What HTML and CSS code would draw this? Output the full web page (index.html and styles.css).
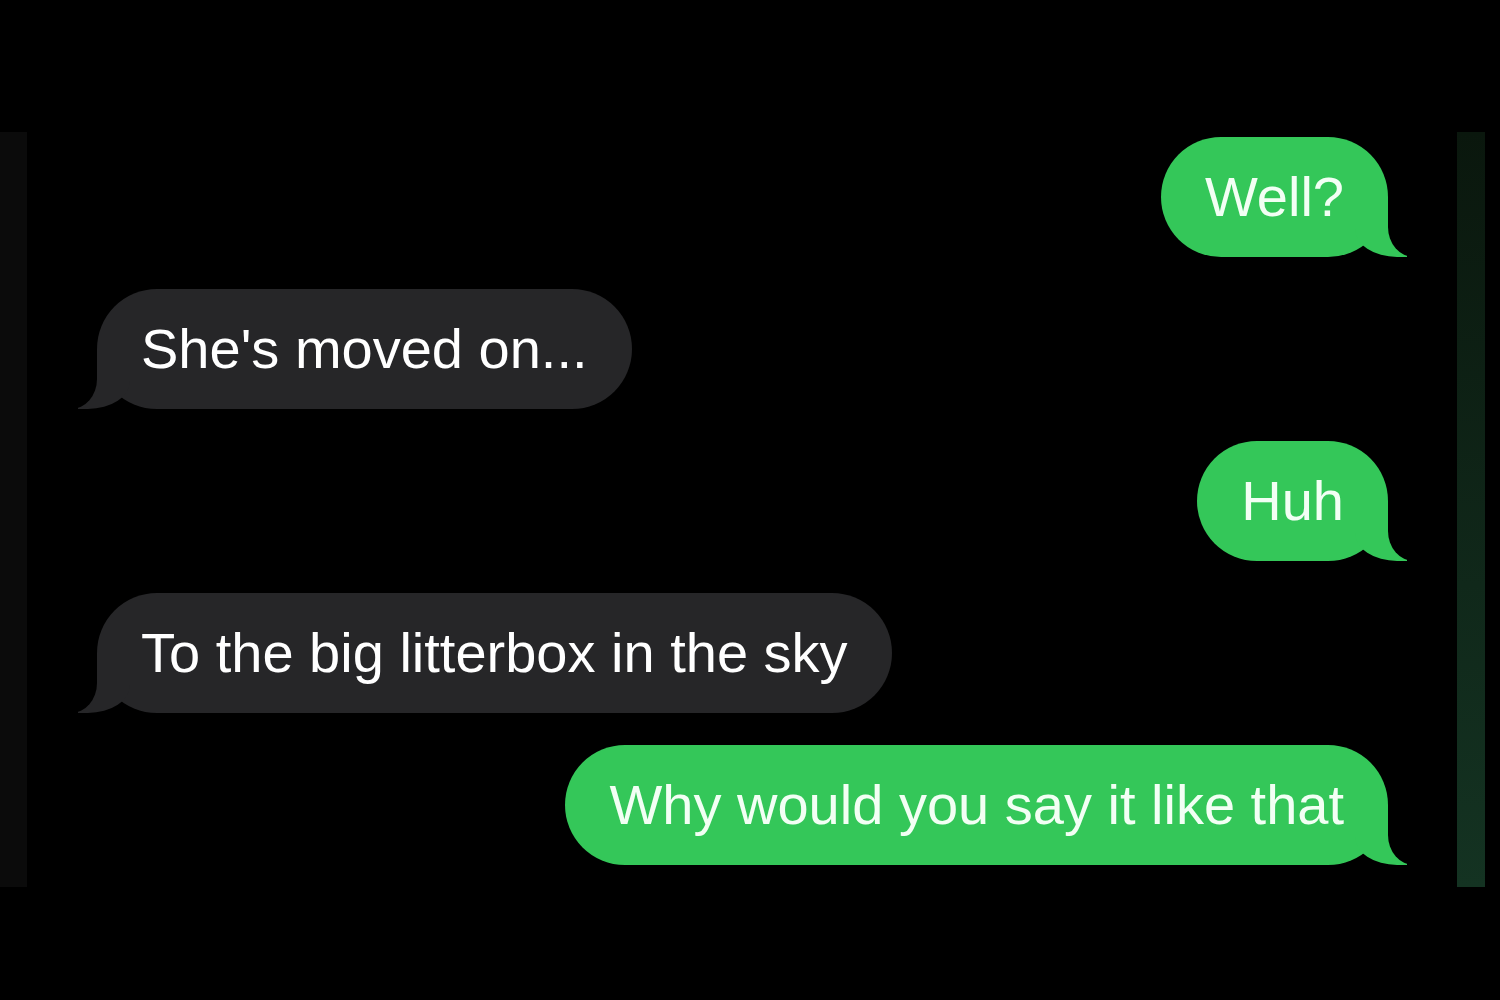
FILE: index.html
```html
<!DOCTYPE html>
<html lang="en">
<head>
    <meta charset="UTF-8">
    <meta name="viewport" content="width=device-width, initial-scale=1.0">
    <title>Messages</title>
    <link rel="stylesheet" href="styles.css">
</head>
<body>

    <div class="shot">
        <div class="edge-left"></div>
        <main class="chat">
            <div class="bubble sent">Well?</div>
            <div class="bubble received">She's moved on...</div>
            <div class="bubble sent">Huh</div>
            <div class="bubble received">To the big litterbox in the sky</div>
            <div class="bubble sent">Why would you say it like that</div>
        </main>
        <div class="edge-right"></div>
    </div>

</body>
</html>
```

FILE: styles.css
```css
body {
    margin: 0;
    padding: 0;
    background-color: #000000;
    font-family: "Liberation Sans", Arial, sans-serif;
}

.shot {
    display: flex;
    margin-top: 132px;
    height: 755px;
    padding-right: 15px;
}

.edge-left {
    width: 27px;
    background-color: #0b0b0b;
}

.edge-right {
    width: 28px;
    background: linear-gradient(#0a170d, #10281a 60%, #143322);
}

.chat {
    flex: 1;
    display: flex;
    flex-direction: column;
    gap: 32px;
    padding: 5px 69px 0 70px;
}

.bubble {
    position: relative;
    font-size: 56px;
    line-height: 60px;
    padding: 30px 44px;
    border-radius: 60px;
    color: #ffffff;
    max-width: 1200px;
}

.sent {
    align-self: flex-end;
    background-color: #34c759;
    color: #f2fff4;
}

.received {
    align-self: flex-start;
    background-color: #262628;
}

/* tail */
.bubble::before,
.bubble::after {
    content: "";
    position: absolute;
    bottom: 0;
}

.sent::before {
    right: -19px;
    width: 52px;
    height: 60px;
    background-color: #34c759;
    border-bottom-left-radius: 42px 28px;
}

.sent::after {
    right: -30px;
    width: 30px;
    height: 62px;
    background-color: #000000;
    border-bottom-left-radius: 26px 30px;
}

.received::before {
    left: -19px;
    width: 52px;
    height: 60px;
    background-color: #262628;
    border-bottom-right-radius: 42px 28px;
}

.received::after {
    left: -30px;
    width: 30px;
    height: 62px;
    background-color: #000000;
    border-bottom-right-radius: 26px 30px;
}
```
